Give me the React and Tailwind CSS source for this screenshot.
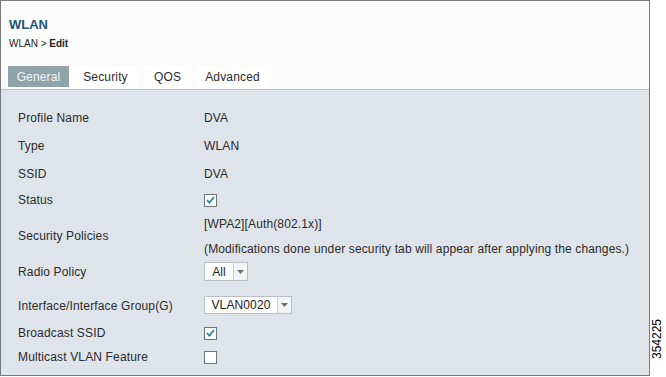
const labelFont = { fontFamily: '"Liberation Sans", Arial, sans-serif' };

function Check({ checked }) {
  return (
    <div className="w-[13px] h-[13px] border border-[#6f7478] bg-white flex items-center justify-center">
      {checked && (
        <svg width="9" height="8" viewBox="0 0 9 8">
          <path d="M1 4.2 L3.4 6.6 L8 1.2" fill="none" stroke="#2f86a6" strokeWidth="1.8" />
        </svg>
      )}
    </div>
  );
}

function Select({ value, boxW, arrowW }) {
  return (
    <div className="flex h-full border border-[#b9bfc4] bg-white">
      <div className={`${boxW} flex items-center justify-center text-[12px] text-[#222]`}>{value}</div>
      <div className={`${arrowW} border-l border-[#c9ced2] bg-[#f3f4f5] flex items-center justify-center`}>
        <svg width="7" height="4" viewBox="0 0 7 4">
          <path d="M0 0 L7 0 L3.5 4 Z" fill="#6b7075" />
        </svg>
      </div>
    </div>
  );
}

function Row({ label, h, children, extra = '' }) {
  return (
    <div className={`flex items-center ${h} ${extra}`}>
      <div className="w-[186px] text-[12px] tracking-[0.15px] text-[#2b2b2b]">{label}</div>
      <div className="flex-1 text-[12px] tracking-[0.13px] text-[#2b2b2b]">{children}</div>
    </div>
  );
}

export default function App() {
  return (
    <div className="w-[666px] h-[377px] bg-white flex" style={labelFont}>
      <div className="w-[650px] h-[376px] shrink-0 border border-[#77797b] flex flex-col">
        {/* header */}
        <div className="bg-[#fcfcfc] h-[88px] flex flex-col pl-[8px]">
          <div className="mt-[16px] text-[13px] font-bold text-[#1d5674] leading-[16px]">WLAN</div>
          <div className="mt-[4px] text-[10px] text-[#222] leading-[14px]">
            WLAN &gt; <span className="font-bold">Edit</span>
          </div>
          <div className="mt-[15px] flex text-[12px] tracking-[0.15px] h-[21px]">
            <div className="w-[61px] -ml-[1px] bg-[#8fa3ab] text-[#f4f6f7] flex items-center justify-center">General</div>
            <div className="w-[65px] ml-[4px] bg-white text-[#2b2b2b] flex items-center justify-center">Security</div>
            <div className="w-[47px] ml-[6px] bg-white text-[#2b2b2b] flex items-center justify-center">QOS</div>
            <div className="w-[73px] ml-[5px] bg-white text-[#2b2b2b] flex items-center justify-center">Advanced</div>
          </div>
        </div>
        {/* content */}
        <div className="flex-1 bg-[#dfe4ea] border-t border-[#b5c0c8] pl-[17px] pt-[14px]">
          <Row label="Profile Name" h="h-[28px]">DVA</Row>
          <Row label="Type" h="h-[27px]">WLAN</Row>
          <Row label="SSID" h="h-[29px]">DVA</Row>
          <Row label="Status" h="h-[24px]">
            <Check checked />
          </Row>
          <Row label="Security Policies" h="h-[48px]">
            <div className="leading-[18px]">[WPA2][Auth(802.1x)]</div>
            <div className="leading-[18px] mt-[7px]">
              (Modifications done under security tab will appear after applying the changes.)
            </div>
          </Row>
          <Row label="Radio Policy" h="h-[23px]">
            <div className="h-[19px] w-[44px]">
              <Select value="All" boxW="w-[28px]" arrowW="w-[14px]" />
            </div>
          </Row>
          <Row label="Interface/Interface Group(G)" h="h-[28px]" extra="mt-[9px]">
            <div className="h-[18px] w-[88px] -mt-[3px]">
              <Select value="VLAN0020" boxW="w-[72px]" arrowW="w-[14px]" />
            </div>
          </Row>
          <Row label="Broadcast SSID" h="h-[26px]">
            <Check checked />
          </Row>
          <Row label="Multicast VLAN Feature" h="h-[22px]">
            <Check />
          </Row>
        </div>
      </div>
      <div className="w-[16px] shrink-0 flex flex-col justify-end pb-[16px]">
        <div className="h-[44px] w-[16px] flex items-center justify-center">
          <div className="-rotate-90 text-[12px] text-black whitespace-nowrap -ml-[1px]">354225</div>
        </div>
      </div>
    </div>
  );
}
